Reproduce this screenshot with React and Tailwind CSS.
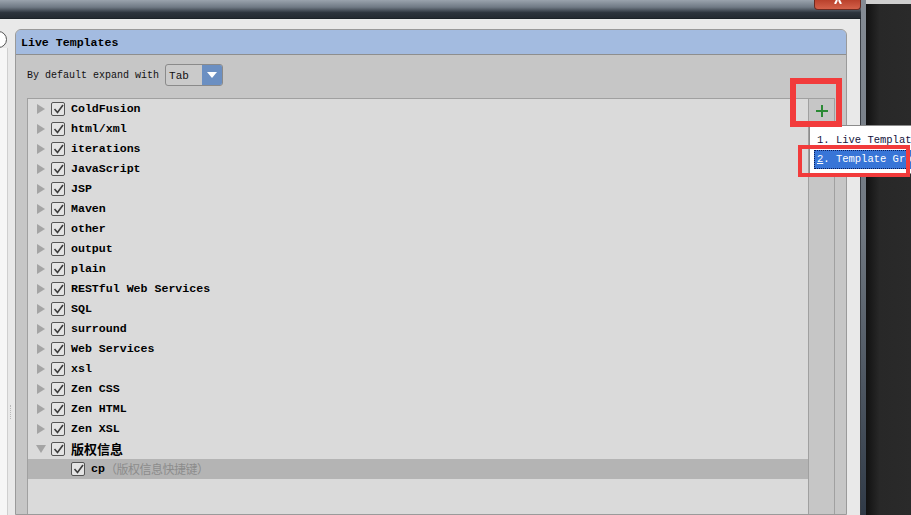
import React from 'react';

const groups = [
  'ColdFusion', 'html/xml', 'iterations', 'JavaScript', 'JSP', 'Maven', 'other', 'output', 'plain',
  'RESTful Web Services', 'SQL', 'surround', 'Web Services', 'xsl', 'Zen CSS', 'Zen HTML', 'Zen XSL',
];

const mono = "font-['Liberation_Mono','Noto_Sans_CJK_SC',monospace]";

function Check() {
  return (
    <span className="flex h-[14px] w-[14px] shrink-0 items-center justify-center rounded-[2px] border border-[#555] bg-[#e4e4e4]">
      <svg width="11" height="10" viewBox="0 0 11 10">
        <path d="M1.5 5 L4.5 8.5 L10 1" fill="none" stroke="#3c3c3c" strokeWidth="1.6" />
      </svg>
    </span>
  );
}

function Arrow({ open }) {
  return open ? (
    <svg width="10" height="8" viewBox="0 0 10 8"><path d="M0 0 H10 L5 8 Z" fill="#a4a4a4" /></svg>
  ) : (
    <svg width="8" height="10" viewBox="0 0 8 10"><path d="M0 0 L8 5 L0 10 Z" fill="#a4a4a4" /></svg>
  );
}

function GroupRow({ name, open, cjk }) {
  return (
    <div className="flex h-[20px] items-center">
      <span className="flex w-[23px] justify-center pl-[3px]"><Arrow open={open} /></span>
      <Check />
      <span
        className={`ml-[6px] font-bold text-black ${cjk ? "font-['Noto_Sans_CJK_SC',sans-serif] text-[13px]" : `${mono} text-[11.6px]`}`}
      >
        {name}
      </span>
    </div>
  );
}

export default function App() {
  return (
    <div className="relative flex h-[515px] w-[911px] overflow-hidden bg-[#232323]">
      {/* main window */}
      <div className="flex h-full w-[861px] flex-col">
        <div className="flex h-[18px] justify-end bg-[linear-gradient(to_bottom,#9aa3ad_0%,#6f7984_40%,#2d343d_70%,#242a31_100%)]">
          <div className="flex h-[10px] w-[47px] items-start justify-center overflow-hidden rounded-b-[4px] border border-t-0 border-[#6b2a20] bg-[linear-gradient(to_bottom,#b9412c,#d4614a)]">
            <svg width="10" height="4" viewBox="0 0 10 4"><path d="M2 4 L4 0 M8 4 L6 0" stroke="#fff" strokeWidth="2" /></svg>
          </div>
        </div>
        <div className="flex flex-1 border-t border-[#1c2228] bg-[#e9e9e9]">
          {/* left edge */}
          <div className="flex w-[15px] flex-col">
            <div className="h-[12px]" />
            <div className="-ml-[10px] h-[17px] w-[17px] rounded-full border border-[#555] bg-white" />
            <div className="flex flex-1">
              <div className="w-[8px] border-r border-[#cfcfcf] bg-[#f6f6f6]" />
              <div className="flex w-[7px] items-end pb-[96px]">
                <div className="ml-[2px] h-[14px] w-[2px] border-l border-dotted border-[#b9b9b9]" />
              </div>
            </div>
          </div>
          {/* panel */}
          <div className="mt-[10px] flex w-[832px] flex-col rounded-t-[6px] border border-[#9a9a9a] bg-[#c6c6c6]">
            <div className={`flex h-[25px] items-center rounded-t-[5px] border-b border-[#8e8e8e] bg-[#a3bbe0] pl-[5px] pt-[1px] text-[11.6px] font-bold text-black ${mono}`}>
              Live Templates
            </div>
            <div className="flex items-center pl-[11px] pt-[9px]">
              <span className={`text-[10px] text-[#111] ${mono}`}>By default expand with</span>
              <div className="ml-[6px] flex h-[22px] w-[58px] overflow-hidden rounded-[3px] border border-[#8a8a8a] bg-[#cacaca]">
                <span className={`flex-1 pl-[3px] pt-[3px] text-[11px] text-[#111] ${mono}`}>Tab</span>
                <span className="flex w-[20px] items-center justify-center bg-[#6b8fc2]">
                  <svg width="10" height="6" viewBox="0 0 10 6"><path d="M0 0 H10 L5 6 Z" fill="#fff" /></svg>
                </span>
              </div>
            </div>
            <div className="ml-[11px] mr-[11px] mt-[12px] flex flex-1 border-l border-t border-[#a0a0a0]">
              <div className="flex flex-1 flex-col bg-[#dadada]">
                {groups.map((g) => (
                  <GroupRow key={g} name={g} />
                ))}
                <GroupRow name="版权信息" open cjk />
                <div className="flex h-[20px] items-center bg-[#b4b4b4] pl-[43px]">
                  <Check />
                  <span className={`ml-[6px] text-[11.6px] font-bold text-black ${mono}`}>cp</span>
                  <span className="font-['Noto_Sans_CJK_SC',sans-serif] text-[12px] tracking-[-0.5px] text-[#8c8c8c]">（版权信息快捷键）</span>
                </div>
              </div>
              <div className="w-[27px] border-l border-r border-[#a0a0a0] bg-[#c6c6c6]">
                <div className="flex h-[24px] items-center justify-center border-b border-[#a9a9a9]">
                  <svg width="14" height="14" viewBox="0 0 14 14">
                    <path d="M7 1 V13 M1 7 H13" stroke="#2b8a35" strokeWidth="2" />
                  </svg>
                </div>
              </div>
            </div>
          </div>
          <div className="w-[13px]" />
          <div className="w-px bg-[#3a3f46]" />
        </div>
      </div>
      <div className="w-[5px] bg-[linear-gradient(to_bottom,#848b94_0%,#6f7780_45%,#303a47_100%)]" />
      <div className="flex flex-1 flex-col">
        <div className="h-[4px] bg-[#cfcfcf]" />
        <div className="flex-1 bg-[linear-gradient(to_right,#111,#282828_30%,#2a2a2a)]" />
      </div>

      {/* popup menu */}
      <div className={`absolute left-[809px] top-[125px] w-[170px] whitespace-nowrap border border-[#8c8c8c] bg-white p-[4px] pt-[5px] ${mono} text-[10.5px]`}>
        <div className="flex h-[19px] items-center pl-[3px] text-[#14143c]">1. Live Template</div>
        <div className="flex h-[19px] items-center border border-dotted border-[#0b1e5a] bg-[#3875d7] pl-[2px] text-white">
          <span className="underline">2</span>. Template Group...
        </div>
      </div>

      {/* annotation boxes */}
      <div className="absolute left-[790px] top-[78px] h-[49px] w-[52px] border-[6px] border-[#f23b3b]" />
      <div className="absolute left-[798px] top-[145px] h-[32px] w-[112px] border-[4px] border-[#f23b3b]" />
    </div>
  );
}
